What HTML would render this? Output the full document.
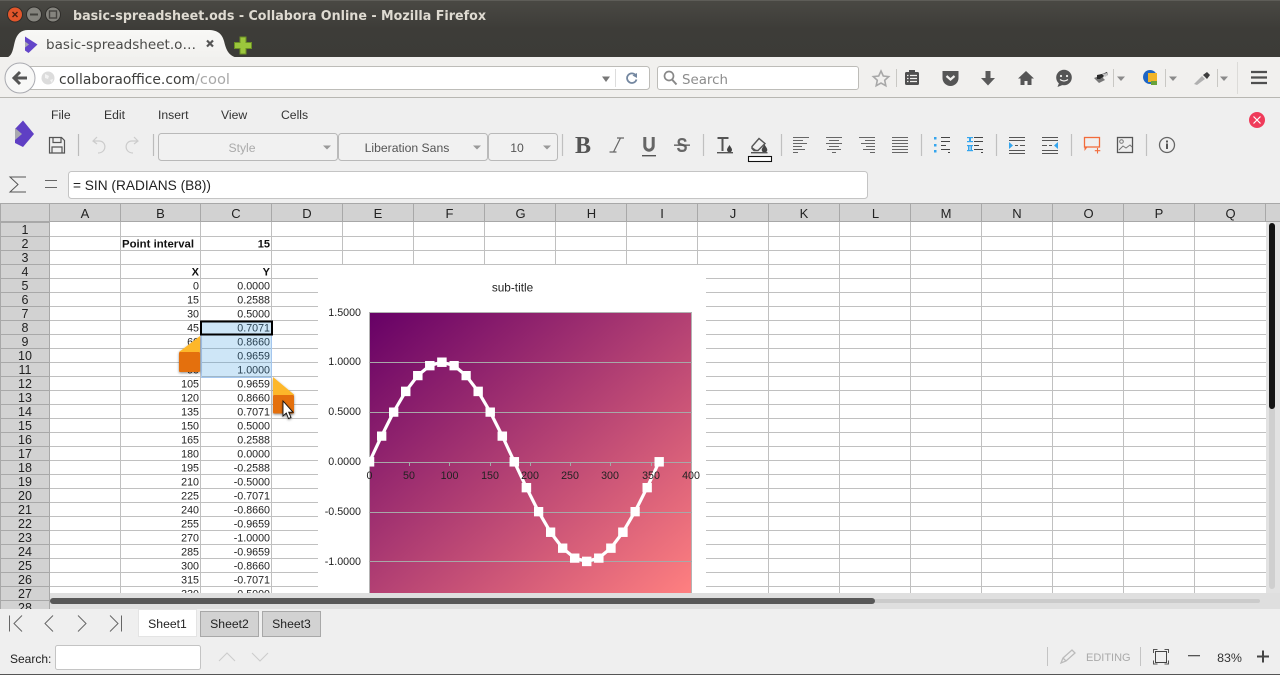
<!DOCTYPE html>
<html><head><meta charset="utf-8"><title>basic-spreadsheet.ods - Collabora Online</title>
<style>
html,body{margin:0;padding:0;background:#efefef;width:1280px;height:675px;overflow:hidden}
svg{display:block;font-family:"Liberation Sans",sans-serif}
.u{font-family:"DejaVu Sans",sans-serif}
.c text{font-size:10.7px;fill:#222;text-anchor:end}
.r text{font-size:12.5px;fill:#222;text-anchor:middle}
.h text{font-size:13px;fill:#222;text-anchor:middle}
.t{font-size:12.2px;fill:#222}
.a text{font-size:10.7px;fill:#222;text-anchor:middle}
</style></head><body>
<svg width="1280" height="675" viewBox="0 0 1280 675" xmlns="http://www.w3.org/2000/svg">
<defs>
<linearGradient id="tb" x1="0" y1="0" x2="0" y2="1"><stop offset="0" stop-color="#4a4944"/><stop offset=".5" stop-color="#3d3c38"/><stop offset="1" stop-color="#3c3b37"/></linearGradient>
<linearGradient id="pl" x1="0" y1="0" x2="1" y2="1"><stop offset="0" stop-color="#660066"/><stop offset="1" stop-color="#ff8080"/></linearGradient>
<linearGradient id="tab" x1="0" y1="0" x2="0" y2="1"><stop offset="0" stop-color="#f8f8f6"/><stop offset="1" stop-color="#f2f1ef"/></linearGradient>
<marker id="m" markerUnits="userSpaceOnUse" markerWidth="10" markerHeight="10" refX="4.75" refY="4.75"><rect width="9.5" height="9.5" fill="#fff"/></marker>
<clipPath id="grid"><rect x="0" y="203" width="1280" height="390"/></clipPath>
<clipPath id="rh"><rect x="0" y="203" width="50" height="406"/></clipPath>
<filter id="sh" x="-30%" y="-30%" width="160%" height="160%"><feDropShadow dx="0" dy="1" stdDeviation="1.2" flood-color="#000" flood-opacity=".45"/></filter>
</defs>

<!-- Window title bar and tabs -->
<rect width="1280" height="58" fill="url(#tb)"/>
<rect width="1280" height="1" fill="#5e5d58"/>
<circle cx="15" cy="14.500" r="7.500" fill="#e2562b" stroke="#2e2d2a"/>
<path d="M12.500 12l5 5M17.500 12l-5 5" stroke="#4a2012" stroke-width="1.400"/>
<circle cx="34" cy="14.500" r="7.500" fill="#85847e" stroke="#2e2d2a"/>
<rect x="30" y="13.500" width="8" height="2" fill="#44433f"/>
<circle cx="53" cy="14.500" r="7.500" fill="#85847e" stroke="#2e2d2a"/>
<rect x="49.500" y="11" width="7" height="7" fill="none" stroke="#44433f" stroke-width="1.400"/>
<text x="73" y="20" class="u" font-size="13.500" font-weight="700" fill="#dfdbd2" textLength="413" lengthAdjust="spacingAndGlyphs">basic-spreadsheet.ods - Collabora Online - Mozilla Firefox</text>

<path d="M6 58C13 56 13 48 15 41C17 34 21 30 28 30H208C218 30 222 34 224 41C226 49 228 56 238 58Z" fill="url(#tab)"/>
<path d="M25 36.500L37.500 44.500 28.500 53 25 50.500z" fill="#6345c9"/><path d="M25 41.500l4 3-4 3z" fill="#a9a9b0"/>
<text x="46" y="49" class="u" font-size="13.500" fill="#4a4a48" textLength="150" lengthAdjust="spacingAndGlyphs">basic-spreadsheet.o…</text>
<path d="M207 40.500l6 6M213 40.500l-6 6" stroke="#555" stroke-width="2.200"/>
<path d="M240 37h6v5.500h5.500v6H246V54h-6v-5.500h-5.500v-6h5.500z" fill="#9bc63c" stroke="#6b8f24"/>

<!-- Browser toolbar -->
<rect y="57" width="1280" height="40" fill="#f1f0ee"/>
<rect y="97" width="1280" height="1" fill="#b8b7b2"/>
<rect x="24" y="66.500" width="625.500" height="23" rx="3" fill="#fff" stroke="#bdbcb8"/>
<circle cx="20" cy="78" r="15" fill="#f8f8f7" stroke="#a9aab0"/>
<path d="M27 78H15M20 72l-6 6 6 6" fill="none" stroke="#555" stroke-width="3"/>
<circle cx="48" cy="78" r="6.500" fill="#dcdcdc"/><path d="M45 74l4 2-1 3-3-1zM50 80l3-1-1 4z" fill="#f3f3f3"/>
<text x="59" y="84" class="u" font-size="14.200" fill="#3e3e3c" textLength="136" lengthAdjust="spacingAndGlyphs">collaboraoffice.com</text>
<text x="195" y="84" class="u" font-size="14.200" fill="#a8a8a8" textLength="35" lengthAdjust="spacingAndGlyphs">/cool</text>
<path d="M602 76.500h8l-4 5.500z" fill="#777"/>
<path d="M615.500 69v18" stroke="#ddd"/>
<path d="M635.500 75a4.800 4.800 0 1 0 1 4.500" fill="none" stroke="#7487a0" stroke-width="1.800"/><path d="M632.500 75.500l4.500-2.500v5z" fill="#7487a0"/>
<rect x="657.500" y="66.500" width="201" height="23" rx="2.500" fill="#fff" stroke="#bdbcb8"/>
<circle cx="669" cy="76" r="4.500" fill="none" stroke="#888" stroke-width="1.700"/><path d="M672 79.500l4.500 5" stroke="#888" stroke-width="2"/>
<text x="682" y="84" class="u" font-size="13.500" fill="#8c8c8c" textLength="46" lengthAdjust="spacingAndGlyphs">Search</text>
<path d="M881 71l2.300 5 5.400.6-4 3.700 1.100 5.400-4.800-2.700-4.800 2.700 1.100-5.400-4-3.700 5.400-.6z" fill="#f1f0ee" stroke="#a8a8a8" stroke-width="1.600"/>
<path d="M896.500 69v18" stroke="#c9c8c4"/>
<rect x="905" y="72" width="14" height="13" rx="1.500" fill="#4f4f4f"/><rect x="909" y="70" width="6" height="3.500" fill="#4f4f4f"/>
<path d="M907 75.500h1.500M910 75.500h7M907 78.500h1.500M910 78.500h7M907 81.500h1.500M910 81.500h7" stroke="#f1f0ee" stroke-width="1.200"/>
<path d="M942.500 71h16v7a8 8 0 0 1-16 0z" fill="#555"/><path d="M946.500 76l4 3.500 4-3.500" fill="none" stroke="#f1f0ee" stroke-width="2.200"/>
<path d="M985.500 71h5v7h4.500l-7 7.500-7-7.500h4.500z" fill="#5a5a5a"/>
<path d="M1026 71l-8 7.500h2.500V85h4v-4h3v4h4v-6.500h2.500z" fill="#555"/>
<circle cx="1064" cy="77.500" r="7.800" fill="#555"/><path d="M1059 83l-1.500 4 5-2z" fill="#555"/><circle cx="1061" cy="76" r="1.100" fill="#f1f0ee"/><circle cx="1067" cy="76" r="1.100" fill="#f1f0ee"/><path d="M1060 79.500q4 3 8 0" fill="none" stroke="#f1f0ee" stroke-width="1.100"/>
<path d="M1094 78l5-2 2-2 3 1-1 3 2 2-4 2-2 1-2-2z" fill="#777"/><path d="M1097 75l5-1 5-2 1 3-4 1-4 3-3 0zM1094 78l3-1M1096 82l3-3" fill="#2a2a2a"/><path d="M1102 74l5-1 1 2-3 2z" fill="#c4c4c4"/>
<path d="M1113.500 69v18" stroke="#c9c8c4"/><path d="M1117 76.500h8l-4 4.500z" fill="#8a8a8a"/>
<circle cx="1150" cy="77" r="7" fill="#1f66c4"/><rect x="1148" y="73" width="9" height="9" fill="#f0b429"/><rect x="1151" y="81" width="6" height="4" fill="#69a23a"/>
<path d="M1165.500 69v18" stroke="#c9c8c4"/><path d="M1169 76.500h8l-4 4.500z" fill="#8a8a8a"/>
<path d="M1194 84l8-8 3 3-8 6z" fill="#b0b0b0"/><path d="M1203 75l4-3 3 3-3 4z" fill="#3d3d3d"/>
<path d="M1217.500 69v18" stroke="#c9c8c4"/><path d="M1220 76.500h8l-4 4.500z" fill="#8a8a8a"/>
<path d="M1237.500 62v32" stroke="#dcdbd8"/>
<path d="M1251 72h16M1251 77.500h16M1251 83h16" stroke="#4f4f4f" stroke-width="2.300"/>

<!-- App toolbar -->
<rect y="98" width="1280" height="105" fill="#efefef"/>
<g font-size="12.200" fill="#333">
<text x="51" y="119">File</text><text x="104" y="119">Edit</text><text x="158" y="119">Insert</text><text x="221" y="119">View</text><text x="281" y="119">Cells</text>
</g>
<path d="M23 120.500L34 134 23 147 15 143V129z" fill="#5f3fc4"/><path d="M15 128l7 6-7 6z" fill="#a8a8b0"/>
<path d="M49.500 137.500h12l3 3v12.500h-15z M53 137.500v5h8v-5M52 153v-6h10v6" fill="none" stroke="#555" stroke-width="1.200"/>
<path d="M78.500 134v22M153.500 134v22" stroke="#bbb" stroke-width="1.200"/>
<path d="M97 137l-4 4 4 3M93 141h6c8 0 8 12-1 12" fill="none" stroke="#ccc" stroke-width="1.200"/>
<path d="M134 137l4 4-4 3M138 141h-6c-8 0-8 12 1 12" fill="none" stroke="#ccc" stroke-width="1.200"/>

<rect x="158.500" y="133.500" width="179" height="27" rx="3" fill="#f1f1f1" stroke="#b9b9b9"/>
<rect x="338.500" y="133.500" width="149" height="27" rx="3" fill="#f1f1f1" stroke="#b9b9b9"/>
<rect x="488.500" y="133.500" width="69" height="27" rx="3" fill="#f1f1f1" stroke="#b9b9b9"/>
<text x="242" y="152" text-anchor="middle" class="t" style="fill:#aaa">Style</text>
<text x="407" y="152" text-anchor="middle" class="t" style="fill:#555">Liberation Sans</text>
<text x="517" y="152" text-anchor="middle" class="t" style="fill:#555">10</text>
<path d="M323 145.500h8l-4 4zM473 145.500h8l-4 4zM543 145.500h8l-4 4z" fill="#999"/>
<path d="M562.500 134v22M703.500 134v22M781.500 134v22M921.500 134v22M996.500 134v22M1071.500 134v22M1146.500 134v22" stroke="#c0c0c0" stroke-width="1.200"/>

<text x="575" y="153" font-family="Liberation Serif" font-size="24" font-weight="700" fill="#555">B</text>
<path d="M617 138h7M609.500 152h7M620.500 138l-7 14" fill="none" stroke="#666" stroke-width="1.200"/>
<path d="M644.800 137v9a4.200 4.200 0 0 0 8.400 0v-9" fill="none" stroke="#666" stroke-width="3"/><rect x="642" y="155" width="14" height="1.400" fill="#555"/>
<text x="676.500" y="152" font-size="20" font-weight="700" fill="#666" textLength="11" lengthAdjust="spacingAndGlyphs">S</text><rect x="674" y="144.500" width="16" height="1.300" fill="#555"/>
<path d="M717.500 138h11M722.500 138v13" stroke="#555" stroke-width="2"/><path d="M729.500 145c-1.500 2.500-2.500 3.500-2.500 4.800a2.500 2.500 0 0 0 5 0c0-1.300-1-2.300-2.500-4.800z" fill="#444"/><rect x="717" y="152" width="16" height="1.400" fill="#555"/>
<path d="M752 146.500l7-8 6 5-7 7h-4l-2-2z" fill="none" stroke="#555" stroke-width="1.400"/><path d="M752 147l5 3.500h-4z" fill="#555"/><path d="M764.500 144.500c-1.800 3-2.800 4-2.800 5.300a2.800 2.800 0 0 0 5.600 0c0-1.300-1-2.300-2.800-5.300z" fill="#444"/><rect x="751" y="152" width="16.500" height="1.400" fill="#555"/>
<rect x="748.500" y="156.500" width="23" height="5" fill="#fff" stroke="#111" stroke-width="1.100"/>

<g stroke="#666" stroke-width="1.100" fill="none">
<path d="M793 137.500h16M793 140.500h10M793 143.500h14M793 146.500h9M793 149.500h12M793 152.500h5"/>
<path d="M826 137.500h16M829 140.500h10M826 143.500h16M829 146.500h10M827 149.500h14M832 152.500h4"/>
<path d="M859 137.500h16M865 140.500h10M861 143.500h14M866 146.500h9M863 149.500h12M870 152.500h5"/>
<path d="M892 137.500h16M892 140.500h16M892 143.500h16M892 146.500h16M892 149.500h16M892 152.500h16"/>
<path d="M941 137.500h9M941 141.500h9M941 145.500h5M941 149.500h9M948 152.500h2" stroke="#444"/>
<path d="M974 137.500h9M974 141.500h9M974 145.500h5M974 149.500h9M981 152.500h2" stroke="#444"/>
<path d="M1009 137.500h16M1009 140.500h16M1015 145.500h3M1020 145.500h5M1009 150.500h16M1009 153.500h16" stroke="#555"/>
<path d="M1042 137.500h16M1042 140.500h16M1042 145.500h5M1049 145.500h3M1042 150.500h16M1042 153.500h16" stroke="#555"/>
</g>
<g fill="#34a5ee">
<rect x="934" y="137" width="2.500" height="2.500"/><rect x="934" y="144" width="2.500" height="2.500"/><rect x="934" y="150" width="2.500" height="2.500"/>
<rect x="967" y="137" width="6" height="1.200"/><rect x="969" y="138" width="2" height="3"/><rect x="967" y="141" width="6" height="1.200"/>
<rect x="967" y="145" width="6" height="1.200"/><rect x="968" y="146" width="1.500" height="4"/><rect x="970.500" y="146" width="1.500" height="4"/><rect x="967" y="150" width="6" height="1.200"/>
<path d="M1009 142l4 3.500-4 3.500zM1058 142l-4 3.500 4 3.500z"/>
</g>
<rect x="1084.500" y="137.500" width="15" height="9.500" fill="none" stroke="#f26b3a" stroke-width="1.300"/><path d="M1084.500 147v4l3-4" fill="#f26b3a"/><path d="M1097.500 148v5.500M1094.800 150.700h5.500" stroke="#f26b3a" stroke-width="1.100"/>
<rect x="1117.500" y="137.500" width="15" height="15" fill="none" stroke="#555" stroke-width="1.300"/><circle cx="1121.500" cy="141.500" r="1.800" fill="none" stroke="#777"/><path d="M1119 150l4-4 3 2 4-3 2 2" fill="none" stroke="#777"/>
<circle cx="1167" cy="145" r="7.500" fill="none" stroke="#666" stroke-width="1.300"/><rect x="1166" y="143.500" width="2" height="5.500" fill="#555"/><rect x="1166" y="140.500" width="2" height="2" fill="#555"/>
<circle cx="1257" cy="120" r="8" fill="#ef3b5a"/><path d="M1253.500 116.500l7 7M1260.500 116.500l-7 7" stroke="#fff" stroke-width="1.200"/>

<!-- Formula bar -->
<path d="M26 177H10l8 7.500-8 7.500h16" fill="none" stroke="#555" stroke-width="1"/>
<path d="M45 180.500h12M45 187.500h12" stroke="#666" stroke-width="1.100"/>
<rect x="68.500" y="171.500" width="799" height="27" rx="3" fill="#fff" stroke="#c4c4c4"/>
<text x="73" y="190" font-size="13.500" fill="#222" textLength="138" lengthAdjust="spacingAndGlyphs">= SIN (RADIANS (B8))</text>

<!-- Sheet grid -->
<rect y="203" width="1280" height="406" fill="#fff"/>
<g stroke="#c0c0c0" clip-path="url(#grid)" fill="none">
<path d="M120.500 222v372M200.500 222v372M271.500 222v372M342.500 222v372M413.500 222v372M484.500 222v372M555.500 222v372M626.500 222v372M697.500 222v372M768.500 222v372M839.500 222v372M910.500 222v372M981.500 222v372M1052.500 222v372M1123.500 222v372M1194.500 222v372"/>
<path d="M50 236.500h1216M50 250.500h1216M50 264.500h1216M50 278.500h1216M50 292.500h1216M50 306.500h1216M50 320.500h1216M50 334.500h1216M50 348.500h1216M50 362.500h1216M50 376.500h1216M50 390.500h1216M50 404.500h1216M50 418.500h1216M50 432.500h1216M50 446.500h1216M50 460.500h1216M50 474.500h1216M50 488.500h1216M50 502.500h1216M50 516.500h1216M50 530.500h1216M50 544.500h1216M50 558.500h1216M50 572.500h1216M50 586.500h1216"/>
</g>

<!-- Column headers -->
<rect y="203" width="1280" height="19" fill="#d2d2d2"/>
<path d="M0 203.500h1280M0 221.500h1280" stroke="#a8a8a8"/>
<path d="M49.500 204v18M120.500 204v18M200.500 204v18M271.500 204v18M342.500 204v18M413.500 204v18M484.500 204v18M555.500 204v18M626.500 204v18M697.500 204v18M768.500 204v18M839.500 204v18M910.500 204v18M981.500 204v18M1052.500 204v18M1123.500 204v18M1194.500 204v18M1265.500 204v18M.5 204v405" stroke="#a8a8a8"/>
<g class="h">
<text x="85" y="218">A</text><text x="160.500" y="218">B</text><text x="236" y="218">C</text><text x="307" y="218">D</text><text x="378" y="218">E</text><text x="449.500" y="218">F</text><text x="520.500" y="218">G</text><text x="591.500" y="218">H</text><text x="662" y="218">I</text><text x="733" y="218">J</text><text x="804" y="218">K</text><text x="875.500" y="218">L</text><text x="946" y="218">M</text><text x="1017" y="218">N</text><text x="1088.500" y="218">O</text><text x="1159" y="218">P</text><text x="1230.500" y="218">Q</text>
</g>

<!-- Row headers -->
<rect y="222" width="50" height="387" fill="#d2d2d2"/>
<path d="M49.500 222v387M0 222.500h50M0 236.500h50M0 250.500h50M0 264.500h50M0 278.500h50M0 292.500h50M0 306.500h50M0 320.500h50M0 334.500h50M0 348.500h50M0 362.500h50M0 376.500h50M0 390.500h50M0 404.500h50M0 418.500h50M0 432.500h50M0 446.500h50M0 460.500h50M0 474.500h50M0 488.500h50M0 502.500h50M0 516.500h50M0 530.500h50M0 544.500h50M0 558.500h50M0 572.500h50M0 586.500h50M0 600.500h50M.5 222v387" stroke="#a8a8a8"/>
<g class="r" clip-path="url(#rh)">
<text x="25" y="234">1</text><text x="25" y="248">2</text><text x="25" y="262">3</text><text x="25" y="276">4</text><text x="25" y="290">5</text><text x="25" y="304">6</text><text x="25" y="318">7</text><text x="25" y="332">8</text><text x="25" y="346">9</text><text x="25" y="360">10</text><text x="25" y="374">11</text><text x="25" y="388">12</text><text x="25" y="402">13</text><text x="25" y="416">14</text><text x="25" y="430">15</text><text x="25" y="444">16</text><text x="25" y="458">17</text><text x="25" y="472">18</text><text x="25" y="486">19</text><text x="25" y="500">20</text><text x="25" y="514">21</text><text x="25" y="528">22</text><text x="25" y="542">23</text><text x="25" y="556">24</text><text x="25" y="570">25</text><text x="25" y="584">26</text><text x="25" y="598">27</text><text x="25" y="612">28</text>
</g>

<!-- Cell contents -->
<g font-size="11" font-weight="700" fill="#111">
<text x="122" y="247.500" textLength="72" lengthAdjust="spacingAndGlyphs">Point interval</text>
<text x="270" y="247.500" text-anchor="end">15</text>
<text x="199" y="275.500" text-anchor="end">X</text>
<text x="270" y="275.500" text-anchor="end">Y</text>
</g>
<g clip-path="url(#grid)"><g class="c">
<text x="199" y="289.500">0</text><text x="199" y="303.500">15</text><text x="199" y="317.500">30</text><text x="199" y="331.500">45</text><text x="199" y="345.500">60</text><text x="199" y="359.500">75</text><text x="199" y="373.500">90</text><text x="199" y="387.500">105</text><text x="199" y="401.500">120</text><text x="199" y="415.500">135</text><text x="199" y="429.500">150</text><text x="199" y="443.500">165</text><text x="199" y="457.500">180</text><text x="199" y="471.500">195</text><text x="199" y="485.500">210</text><text x="199" y="499.500">225</text><text x="199" y="513.500">240</text><text x="199" y="527.500">255</text><text x="199" y="541.500">270</text><text x="199" y="555.500">285</text><text x="199" y="569.500">300</text><text x="199" y="583.500">315</text><text x="199" y="597.500">330</text>
<text x="270" y="289.500">0.0000</text><text x="270" y="303.500">0.2588</text><text x="270" y="317.500">0.5000</text><text x="270" y="331.500">0.7071</text><text x="270" y="345.500">0.8660</text><text x="270" y="359.500">0.9659</text><text x="270" y="373.500">1.0000</text><text x="270" y="387.500">0.9659</text><text x="270" y="401.500">0.8660</text><text x="270" y="415.500">0.7071</text><text x="270" y="429.500">0.5000</text><text x="270" y="443.500">0.2588</text><text x="270" y="457.500">0.0000</text><text x="270" y="471.500">-0.2588</text><text x="270" y="485.500">-0.5000</text><text x="270" y="499.500">-0.7071</text><text x="270" y="513.500">-0.8660</text><text x="270" y="527.500">-0.9659</text><text x="270" y="541.500">-1.0000</text><text x="270" y="555.500">-0.9659</text><text x="270" y="569.500">-0.8660</text><text x="270" y="583.500">-0.7071</text><text x="270" y="597.500">-0.5000</text>
</g></g>
<rect x="201" y="321" width="70.500" height="56.500" fill="#3a9ae0" fill-opacity=".25"/>
<rect x="201.500" y="321.500" width="70" height="56" fill="none" stroke="#a4c6ee"/>
<rect x="201" y="321.500" width="71" height="13" fill="none" stroke="#000" stroke-width="2"/>

<!-- Selection handles -->
<g filter="url(#sh)"><path d="M179 352l21-16v16z" fill="#fdb72b"/><rect x="179" y="352" width="21" height="20" rx="1" fill="#e4700f"/></g>
<g filter="url(#sh)"><path d="M273 377v18h21v-.5z" fill="#fdb72b"/><rect x="273" y="395" width="21" height="18.500" rx="1" fill="#e4700f"/></g>
<path d="M283 401v15l3.300-3 2.200 5.500 2.500-1-2.300-5.300H293z" fill="#fff" stroke="#111" stroke-width=".9" filter="url(#sh)"/>

<!-- Chart -->
<rect x="318" y="265" width="388" height="328" fill="#fff"/>
<text x="512.500" y="291.500" text-anchor="middle" font-size="11.800" fill="#222">sub-title</text>
<g clip-path="url(#grid)">
<rect x="369.500" y="312.500" width="322" height="281" fill="url(#pl)" stroke="#b3b3b3"/>
<path d="M369 362.500h323M369 412.500h323M369 462.500h323M369 512.500h323M369 561.500h323" stroke="#a8a8a8"/>
<path d="M409.500 462v4M449.500 462v4M490.500 462v4M530.500 462v4M570.500 462v4M610.500 462v4M651.500 462v4" stroke="#a8a8a8"/>
<polyline points="369.500,461.800 381.600,436 393.600,412 405.700,391.400 417.800,375.500 429.800,365.600 441.900,362.200 454,365.600 466,375.500 478.100,391.400 490.200,412 502.300,436 514.300,461.800 526.400,487.600 538.500,511.600 550.500,532.200 562.600,548.100 574.700,558 586.700,561.400 598.800,558 610.900,548.100 622.900,532.200 635,511.600 647.100,487.600 659.100,461.800" fill="none" stroke="#fff" stroke-width="3.200" marker-start="url(#m)" marker-mid="url(#m)" marker-end="url(#m)"/>
</g>
<g font-size="10.700" fill="#222" text-anchor="end">
<text x="361" y="316">1.5000</text><text x="361" y="365">1.0000</text><text x="361" y="415">0.5000</text><text x="361" y="465">0.0000</text><text x="361" y="515">-0.5000</text><text x="361" y="565">-1.0000</text>
</g>
<g class="a">
<text x="369.500" y="479">0</text><text x="409" y="479">50</text><text x="449.500" y="479">100</text><text x="490" y="479">150</text><text x="530" y="479">200</text><text x="570" y="479">250</text><text x="610" y="479">300</text><text x="651" y="479">350</text><text x="691" y="479">400</text>
</g>

<!-- Scrollbars -->
<rect x="1266" y="222" width="14" height="387" fill="#e2e2e2"/>
<rect x="1269" y="223" width="6" height="366" rx="3" fill="#cfcfcf"/>
<rect x="1269" y="223" width="6" height="186" rx="3" fill="#141414"/>
<rect x="50" y="593" width="1230" height="16" fill="#dfdfdf"/>
<rect x="50" y="599" width="1210" height="4" rx="2" fill="#cbcbcb"/>
<rect x="50" y="598" width="825" height="6" rx="3" fill="#585858"/>

<!-- Sheet tabs -->
<rect y="609" width="1280" height="65" fill="#efefef"/>
<path d="M9.500 615.500v16M22 615.500l-8 8 8 8M53 615.500l-8 8 8 8M78 615.500l8 8-8 8M110 615.500l8 8-8 8M121.500 615.500v16" fill="none" stroke="#666" stroke-width="1"/>
<rect x="138.500" y="609.500" width="58" height="27" fill="#fff" stroke="#e4e4e4"/>
<rect x="200.500" y="611.500" width="58" height="25" fill="#d2d2d2" stroke="#a8a8a8"/>
<rect x="262.500" y="611.500" width="58" height="25" fill="#d2d2d2" stroke="#a8a8a8"/>
<g font-size="12.200" fill="#222" text-anchor="middle">
<text x="167.500" y="628">Sheet1</text><text x="229.500" y="628">Sheet2</text><text x="291.500" y="628">Sheet3</text>
</g>

<!-- Status bar -->
<text x="10" y="663" font-size="12" fill="#222">Search:</text>
<rect x="55.500" y="645.500" width="145" height="24" rx="2" fill="#fff" stroke="#c4c4c4"/>
<path d="M219 661l8-8 8 8M252 653l8 8 8-8" fill="none" stroke="#ccc" stroke-width="1.100"/>
<path d="M1047.500 647v19M1140.500 647v19" stroke="#c4c4c4"/>
<path d="M1061 663l2-5 9-8 3 3-9 8-5 2zM1063 658l3 3" fill="none" stroke="#bbb" stroke-width="1.300"/>
<text x="1086" y="661" font-size="11" fill="#aaa">EDITING</text>
<rect x="1155.500" y="651.500" width="11" height="11" fill="none" stroke="#444"/>
<path d="M1153.500 653v-3.500h4M1164.500 649.500h4v3.500M1168.500 660.500v3.500h-4M1157.500 664h-4v-3.500" fill="none" stroke="#555"/>
<rect x="1188" y="655" width="12" height="1.300" fill="#555"/>
<text x="1229.500" y="662" font-size="12.400" fill="#333" text-anchor="middle">83%</text>
<path d="M1263 650.500v12M1257 656.500h12" stroke="#444" stroke-width="2"/>
<rect y="674" width="1280" height="1" fill="#555"/>
</svg>
</body></html>
